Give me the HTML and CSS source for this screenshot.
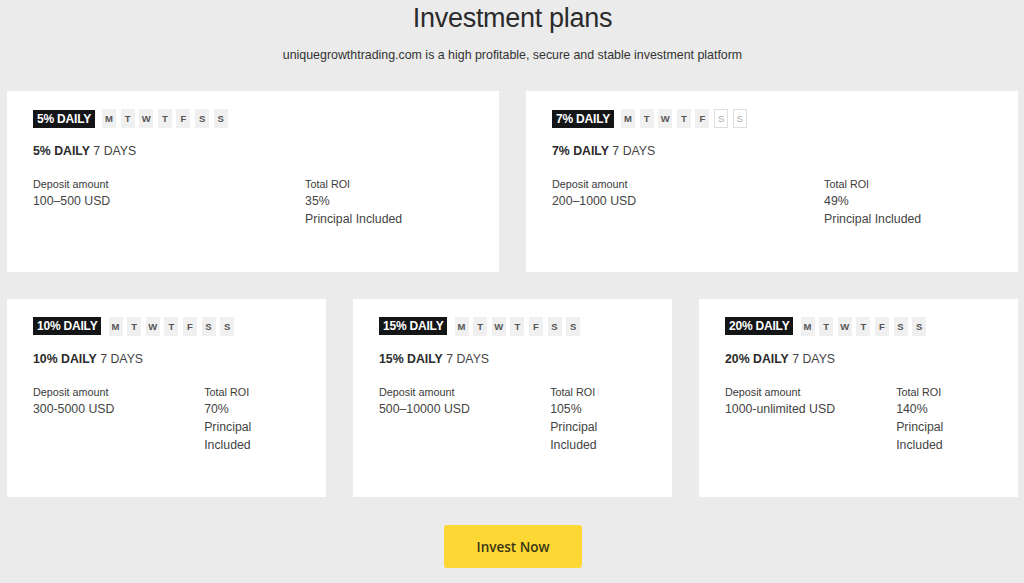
FILE: index.html
```html
<!DOCTYPE html>
<html lang="en">
<head>
<meta charset="utf-8">
<title>Investment plans</title>
<link rel="stylesheet" href="styles.css">
</head>
<body>
<main class="page">
  <h1 class="title">Investment plans</h1>
  <p class="subtitle">uniquegrowthtrading.com is a high profitable, secure and stable investment platform</p>

  <section class="row row-two">
    <article class="card">
      <div class="tags"><span class="badge">5% DAILY</span><span class="day">M</span><span class="day">T</span><span class="day">W</span><span class="day">T</span><span class="day">F</span><span class="day">S</span><span class="day">S</span></div>
      <h2 class="plan"><b>5% DAILY</b> 7 DAYS</h2>
      <div class="info">
        <div><div class="label">Deposit amount</div><div class="value">100–500 USD</div></div>
        <div><div class="label">Total ROI</div><div class="value">35%</div><div class="value">Principal Included</div></div>
      </div>
    </article>
    <article class="card">
      <div class="tags"><span class="badge">7% DAILY</span><span class="day">M</span><span class="day">T</span><span class="day">W</span><span class="day">T</span><span class="day">F</span><span class="day off">S</span><span class="day off">S</span></div>
      <h2 class="plan"><b>7% DAILY</b> 7 DAYS</h2>
      <div class="info">
        <div><div class="label">Deposit amount</div><div class="value">200–1000 USD</div></div>
        <div><div class="label">Total ROI</div><div class="value">49%</div><div class="value">Principal Included</div></div>
      </div>
    </article>
  </section>

  <section class="row row-three">
    <article class="card">
      <div class="tags"><span class="badge">10% DAILY</span><span class="day">M</span><span class="day">T</span><span class="day">W</span><span class="day">T</span><span class="day">F</span><span class="day">S</span><span class="day">S</span></div>
      <h2 class="plan"><b>10% DAILY</b> 7 DAYS</h2>
      <div class="info">
        <div><div class="label">Deposit amount</div><div class="value">300-5000 USD</div></div>
        <div><div class="label">Total ROI</div><div class="value">70%</div><div class="value">Principal Included</div></div>
      </div>
    </article>
    <article class="card">
      <div class="tags"><span class="badge">15% DAILY</span><span class="day">M</span><span class="day">T</span><span class="day">W</span><span class="day">T</span><span class="day">F</span><span class="day">S</span><span class="day">S</span></div>
      <h2 class="plan"><b>15% DAILY</b> 7 DAYS</h2>
      <div class="info">
        <div><div class="label">Deposit amount</div><div class="value">500–10000 USD</div></div>
        <div><div class="label">Total ROI</div><div class="value">105%</div><div class="value">Principal Included</div></div>
      </div>
    </article>
    <article class="card">
      <div class="tags"><span class="badge">20% DAILY</span><span class="day">M</span><span class="day">T</span><span class="day">W</span><span class="day">T</span><span class="day">F</span><span class="day">S</span><span class="day">S</span></div>
      <h2 class="plan"><b>20% DAILY</b> 7 DAYS</h2>
      <div class="info">
        <div><div class="label">Deposit amount</div><div class="value">1000-unlimited USD</div></div>
        <div><div class="label">Total ROI</div><div class="value">140%</div><div class="value">Principal Included</div></div>
      </div>
    </article>
  </section>

  <div class="actions"><a class="btn" href="#">Invest Now</a></div>
</main>
</body>
</html>
```

FILE: styles.css
```css
* { box-sizing: border-box; }
html, body { margin: 0; padding: 0; }
body {
  background: #ebebeb;
  font-family: "Liberation Sans", Arial, sans-serif;
  color: #333;
  height: 583px;
  overflow: hidden;
}
.page {
  padding: 2px 6px 0 7px;
}
.title {
  margin: 0;
  text-align: center;
  font-weight: 400;
  font-size: 27px;
  line-height: 32px;
  color: #2b2b2b;
  letter-spacing: -0.3px;
}
.subtitle {
  margin: 12px 0 27px;
  text-align: center;
  font-size: 12.4px;
  line-height: 18px;
  color: #333;
}
.row {
  display: grid;
  gap: 27px;
  margin-bottom: 27px;
}
.row-two { grid-template-columns: 1fr 1fr; }
.row-three { grid-template-columns: 1fr 1fr 1fr; margin-bottom: 28px; }
.card {
  background: #fff;
  padding: 18px 26px 43px;
}
.tags {
  display: flex;
  align-items: center;
  gap: 4.6px;
  height: 19px;
}
.badge {
  background: #131517;
  color: #fff;
  font-weight: 700;
  font-size: 12px;
  line-height: 18px;
  padding: 0 4px;
  margin-right: 2.5px;
  letter-spacing: -0.2px;
}
.day {
  width: 14px;
  height: 19px;
  background: #f0f0f0;
  color: #555;
  font-size: 9.5px;
  font-weight: 700;
  display: flex;
  align-items: center;
  justify-content: center;
}
.day.off {
  background: #fff;
  border: 1px solid #dedede;
  color: #aaa;
  font-weight: 400;
}
.plan {
  margin: 14px 0 0;
  font-size: 12.3px;
  line-height: 18px;
  font-weight: 400;
  color: #444;
}
.plan b { color: #2a2a2a; font-weight: 700; }
.info {
  display: grid;
  grid-template-columns: 7fr 5fr;
  column-gap: 37px;
  margin-top: 16px;
}
.label {
  font-size: 10.8px;
  line-height: 16px;
  color: #3a3a3a;
}
.value {
  font-size: 12.3px;
  line-height: 18.3px;
  color: #444;
}
.actions {
  display: flex;
  justify-content: center;
}
.btn {
  display: flex;
  align-items: center;
  justify-content: center;
  width: 138px;
  height: 43px;
  background: #fdd835;
  border-radius: 3px;
  color: #3a3517;
  font-family: "Open Sans", "Liberation Sans", sans-serif;
  font-weight: 600;
  font-size: 13.5px;
  text-decoration: none;
  margin-left: 1px;
}
```
